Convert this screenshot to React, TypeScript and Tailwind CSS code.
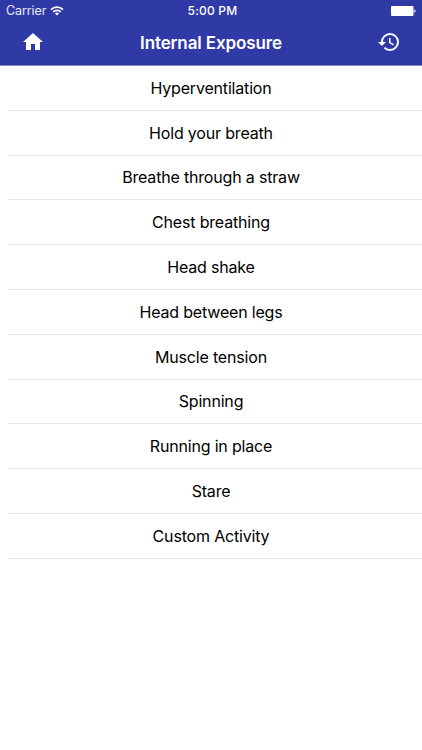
import { MdHistory, MdHome } from 'react-icons/md';

const activities = [
  'Hyperventilation',
  'Hold your breath',
  'Breathe through a straw',
  'Chest breathing',
  'Head shake',
  'Head between legs',
  'Muscle tension',
  'Spinning',
  'Running in place',
  'Stare',
  'Custom Activity',
];

const StatusBar = () => (
  <div className="grid h-[22px] grid-cols-3 items-center">
    <div className="flex items-center gap-1 pl-[6px]">
      <span className="text-[12.5px] tracking-[-0.1px] text-white/90">Carrier</span>
      <svg width="14" height="10" viewBox="0 0 14 10" fill="none" stroke="currentColor" strokeWidth="1.7">
        <path d="M1 3.6a8.5 8.5 0 0 1 12 0M3.2 5.9a5.4 5.4 0 0 1 7.6 0" />
        <path d="M7 9.6 5 7.6a2.8 2.8 0 0 1 4 0z" fill="currentColor" stroke="none" />
      </svg>
    </div>
    <span className="pl-[3px] text-center text-xs font-medium tracking-[0.2px]">5:00 PM</span>
    <div className="flex justify-end pr-[5px]">
      <svg width="26" height="10" viewBox="0 0 26 10" fill="currentColor">
        <rect width="22.5" height="10" rx="1" />
        <path d="M23.3 3.2c1.7.4 1.7 3.2 0 3.6z" />
      </svg>
    </div>
  </div>
);

export default function App() {
  return (
    <div className="h-[750px] w-full overflow-hidden bg-white font-['Inter',sans-serif] text-black">
      <header className="h-[66px] border-b border-[#8489c8] bg-[#303aa6] text-white">
        <StatusBar />
        <div className="flex h-10 items-center justify-between px-[21px]">
          <MdHome size={24} />
          <h1 className="pt-[3px] text-[17px] font-semibold tracking-[-0.12px]">Internal Exposure</h1>
          <MdHistory size={24} />
        </div>
      </header>
      <ul>
        {activities.map((activity) => (
          <li
            key={activity}
            className="ml-2 flex h-[44.8px] items-center justify-center border-b border-[#ebebed] pr-2 text-base tracking-[-0.18px]"
          >
            {activity}
          </li>
        ))}
      </ul>
    </div>
  );
}
